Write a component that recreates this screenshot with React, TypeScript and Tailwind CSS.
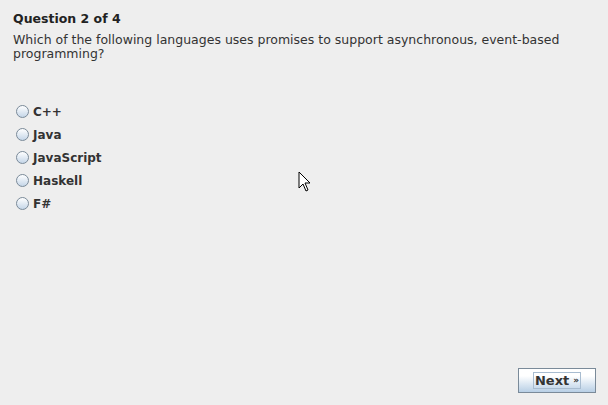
import React from "react";

const options = ["C++", "Java", "JavaScript", "Haskell", "F#"];

function Radio() {
  return (
    <span className="w-[13px] h-[13px] rounded-full border border-[#7a8a99] bg-gradient-to-b from-white to-[#c5d6e8] shrink-0" />
  );
}

export default function App() {
  return (
    <div
      className="relative w-[608px] h-[405px] bg-[#eeeeee] text-[#333333] flex flex-col overflow-hidden"
      style={{ fontFamily: '"DejaVu Sans", sans-serif' }}
    >
      <div className="px-[13px] pt-[11px]">
        <h1 className="text-[12.5px] font-bold leading-[16px] text-[#222]">Question 2 of 4</h1>
        <p className="text-[12.5px] leading-[14px] mt-[6px]">
          Which of the following languages uses promises to support asynchronous, event-based
          <br />
          programming?
        </p>
      </div>

      <div className="flex flex-col gap-[8px] pl-[16px] mt-[43px]">
        {options.map((o) => (
          <label key={o} className="flex items-center gap-[4px] h-[15px]">
            <Radio />
            <span className="text-[12px] font-bold text-[#333]">{o}</span>
          </label>
        ))}
      </div>

      <div className="mt-auto flex justify-end pr-[12px] pb-[12px]">
        <button className="w-[78px] h-[25px] border border-[#7a8a99] bg-gradient-to-b from-white from-30% to-[#b8cfe5] flex items-center justify-center">
          <span className="border border-[#a8bcd0] px-[1px] h-[17px] flex items-center gap-[4px] text-[13px] font-bold text-[#333]">
            Next <span className="text-[9px]">»</span>
          </span>
        </button>
      </div>

      <svg className="absolute left-[298px] top-[171px]" width="14" height="22" viewBox="0 0 14 22">
        <path d="M1 1 L1 17 L5 13 L8 20 L10 19 L7 12 L12 12 Z" fill="white" stroke="black" strokeWidth="1" strokeLinejoin="miter" />
      </svg>
    </div>
  );
}
